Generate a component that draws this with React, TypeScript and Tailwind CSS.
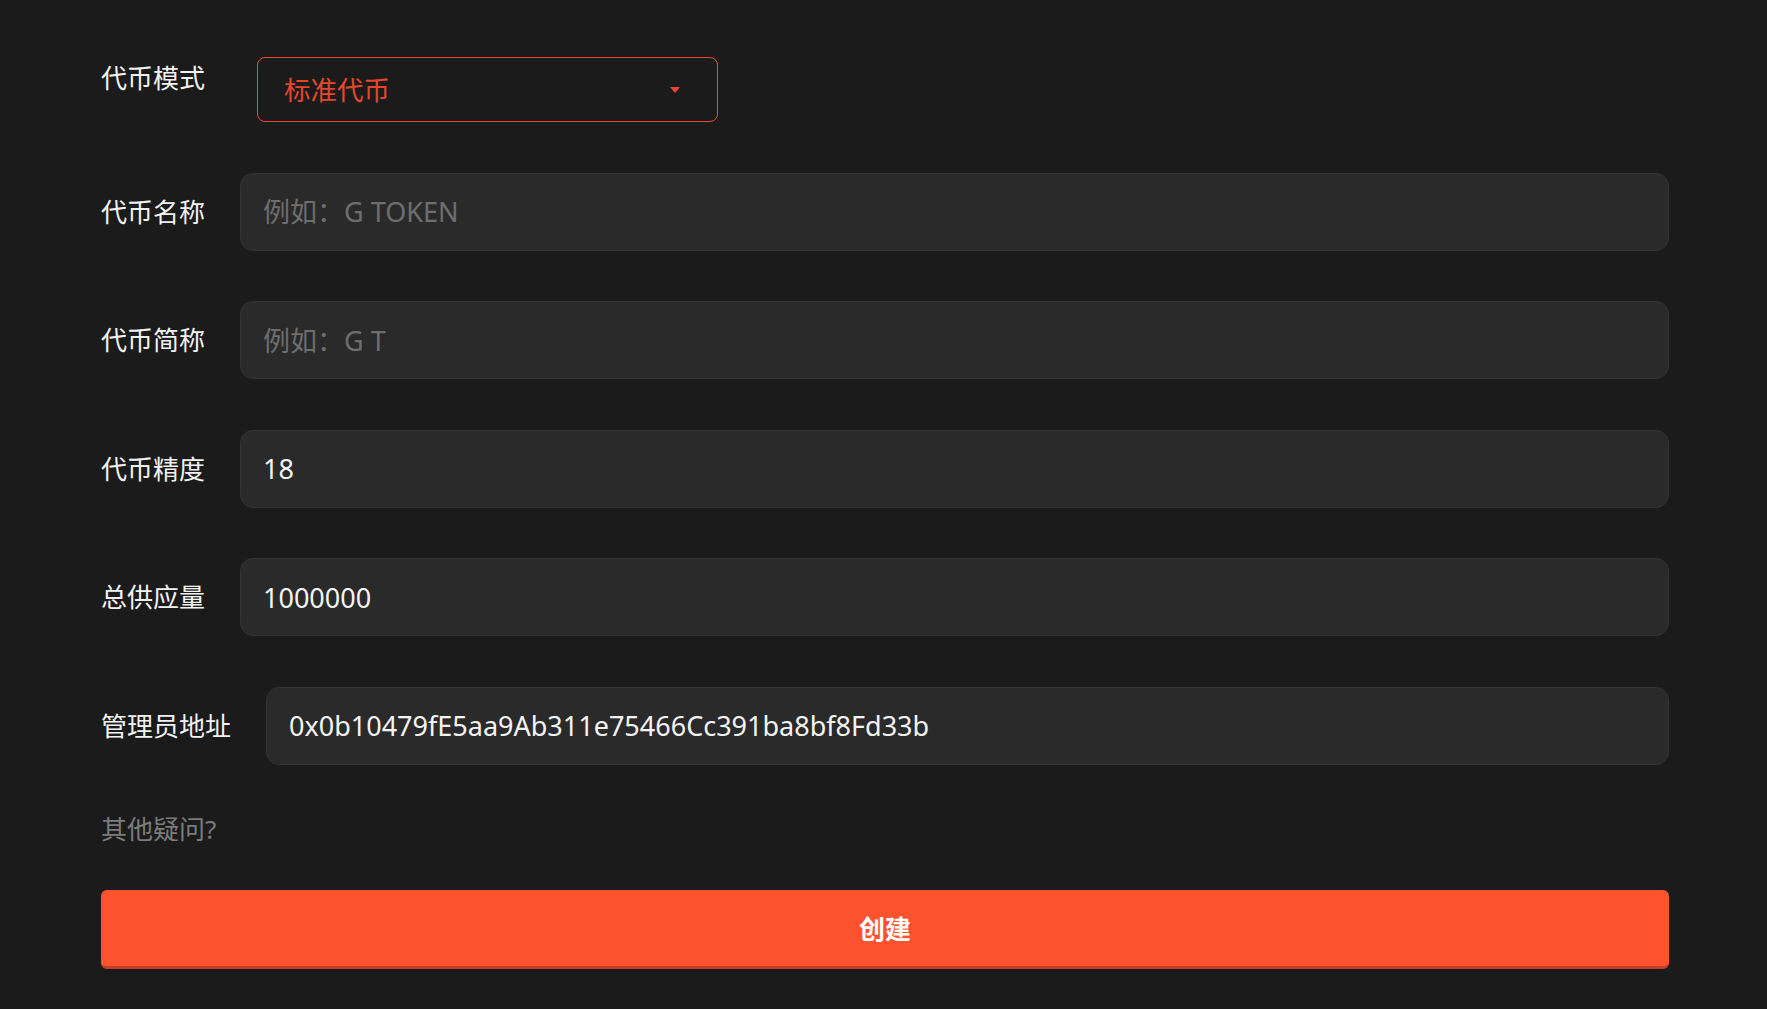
import React from 'react';

const FONT = { fontFamily: '"Noto Sans", "Noto Sans CJK SC", sans-serif' };

interface FieldProps {
  label: string;
  placeholder?: string;
  value?: string;
}

function Field({ label, placeholder, value }: FieldProps) {
  return (
    <div className="flex items-center">
      <label className="mr-[35px] shrink-0 whitespace-nowrap text-[26px] leading-[36px] text-[#f2f2f2]">
        {label}
      </label>
      <input
        readOnly
        defaultValue={value}
        placeholder={placeholder}
        className="h-[78px] flex-1 rounded-[13px] border border-[#333333] bg-[#2a2a2a] px-[22px] text-[27px] text-[#f4f4f4] outline-none placeholder:text-[#6e6e6e]"
        style={FONT}
      />
    </div>
  );
}

export default function App() {
  return (
    <div className="min-h-screen bg-[#1b1b1b]" style={FONT}>
      <div className="flex flex-col gap-[50.5px] pl-[101px] pr-[98px] pt-[57px]">
        {/* modo do token */}
        <div className="flex items-start">
          <label className="mt-[3px] w-[156px] shrink-0 whitespace-nowrap text-[26px] leading-[36px] text-[#f2f2f2]">
            代币模式
          </label>
          <button className="flex h-[65px] w-[461px] items-center justify-between rounded-[8px] border border-[#ee4a2c] bg-transparent pl-[26px] pr-[37px] pt-[3px] text-[26.5px] text-[#e4472b]">
            <span>标准代币</span>
            <svg width="10" height="6" viewBox="0 0 10 6" className="-mt-[3px]">
              <path d="M0 0 L10 0 L5 6 Z" fill="#e4472b" />
            </svg>
          </button>
        </div>

        <Field label="代币名称" placeholder="例如：G TOKEN" />
        <Field label="代币简称" placeholder="例如：G T" />
        <Field label="代币精度" value="18" />
        <Field label="总供应量" value="1000000" />
        <Field label="管理员地址" value="0x0b10479fE5aa9Ab311e75466Cc391ba8bf8Fd33b" />
      </div>

      <div className="pl-[101px] pr-[98px]">
        <p className="mt-[46px] text-[26px] leading-[36px] text-[#7c7c7c]">其他疑问?</p>
        <button className="mt-[43px] flex h-[79px] w-full items-center justify-center rounded-[6px] border-b-[3px] border-[#c13f27] bg-[#fc522e] pt-[3px] text-[26px] font-bold text-white">
          创建
        </button>
      </div>
    </div>
  );
}
